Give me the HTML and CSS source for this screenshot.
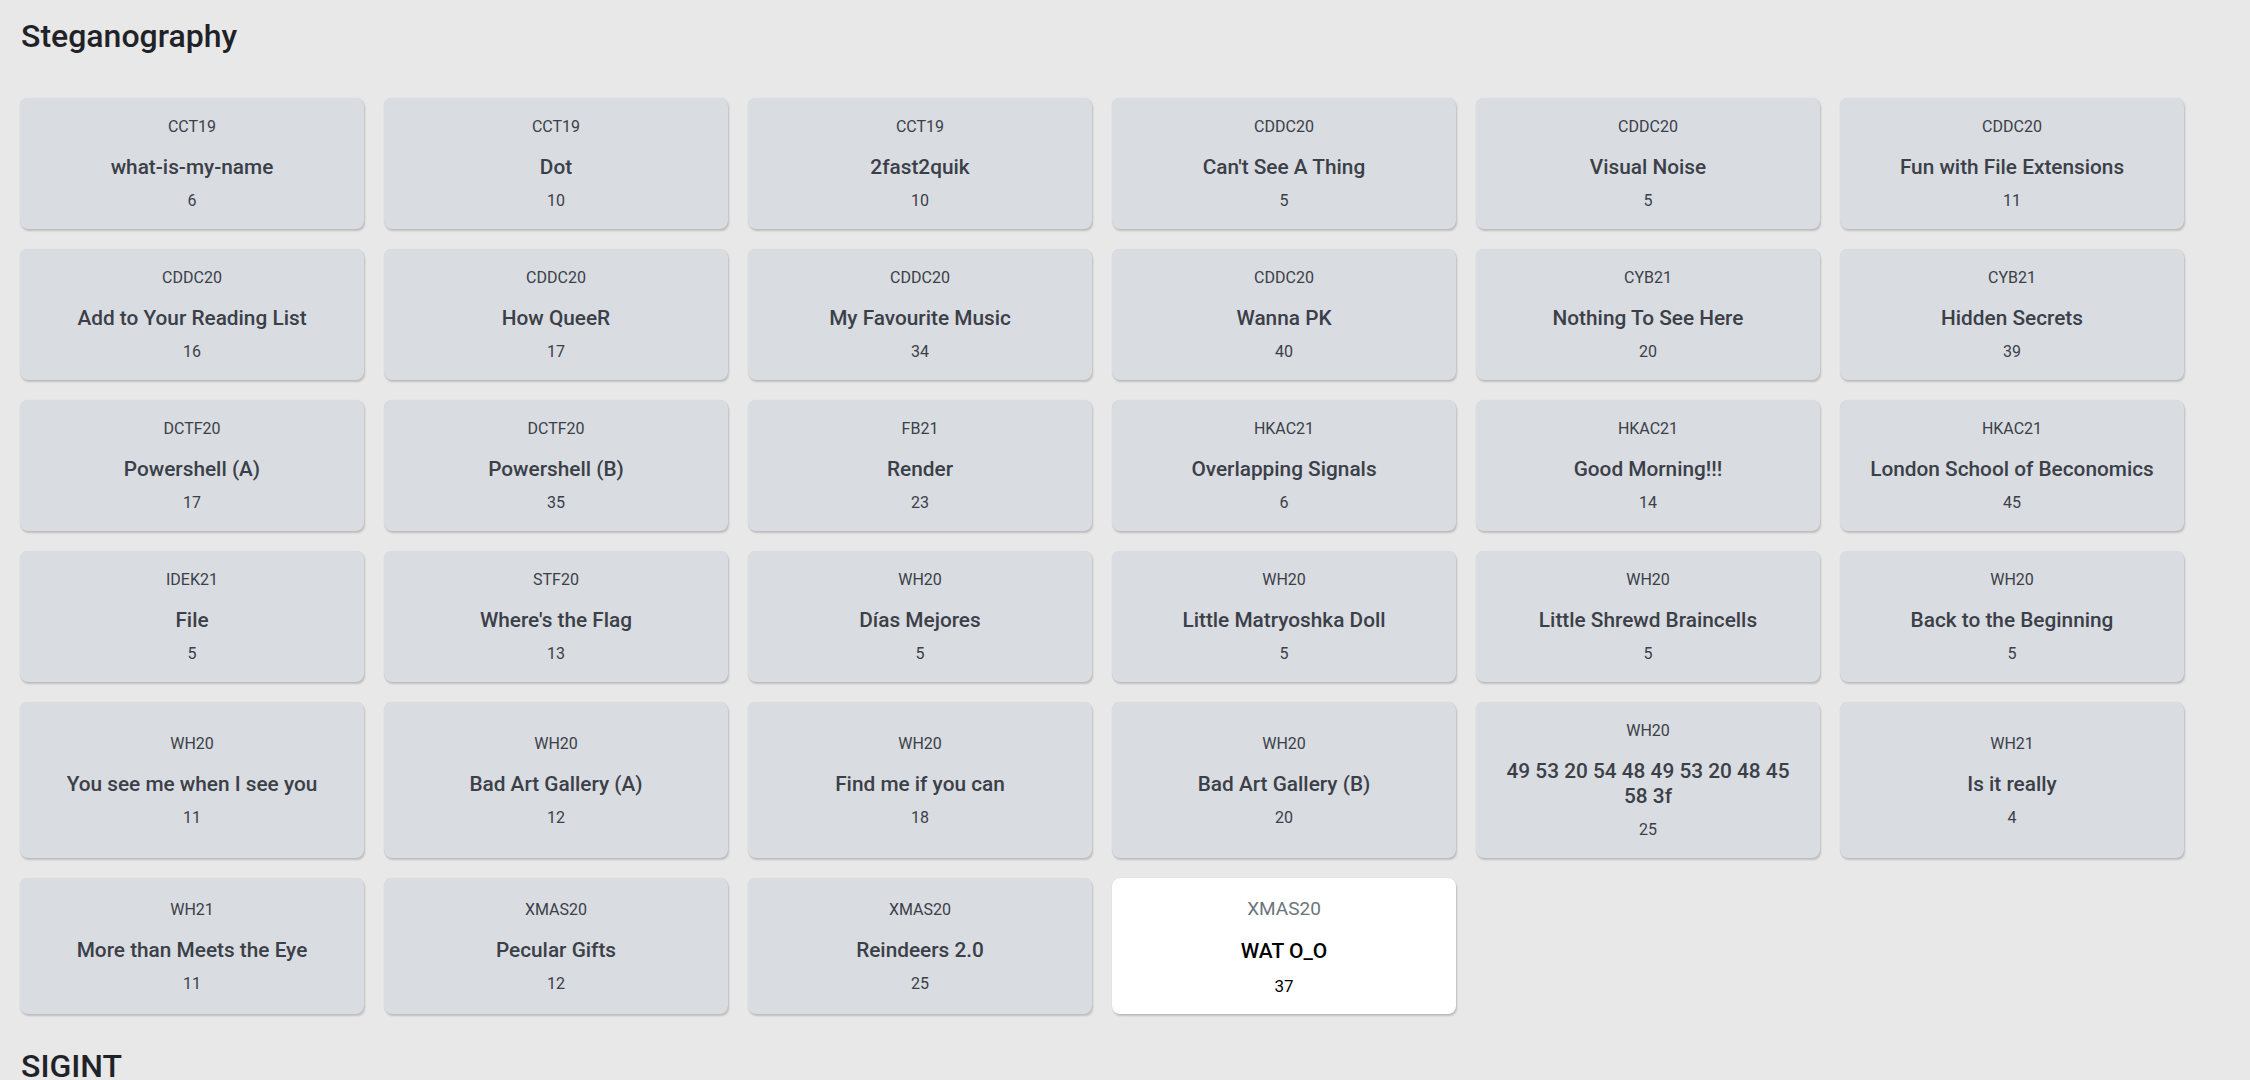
FILE: index.html
```html
<!DOCTYPE html>
<html lang="en">
<head>
<meta charset="utf-8">
<title>Challenges</title>
<link rel="stylesheet" href="styles.css">
</head>
<body>
<main class="page">
  <section class="category">
    <h2 class="category-title">Steganography</h2>
    <div class="grid">
      <div class="card"><div class="card-event">CCT19</div><div class="card-name">what-is-my-name</div><div class="card-count">6</div></div>
      <div class="card"><div class="card-event">CCT19</div><div class="card-name">Dot</div><div class="card-count">10</div></div>
      <div class="card"><div class="card-event">CCT19</div><div class="card-name">2fast2quik</div><div class="card-count">10</div></div>
      <div class="card"><div class="card-event">CDDC20</div><div class="card-name">Can't See A Thing</div><div class="card-count">5</div></div>
      <div class="card"><div class="card-event">CDDC20</div><div class="card-name">Visual Noise</div><div class="card-count">5</div></div>
      <div class="card"><div class="card-event">CDDC20</div><div class="card-name">Fun with File Extensions</div><div class="card-count">11</div></div>

      <div class="card"><div class="card-event">CDDC20</div><div class="card-name">Add to Your Reading List</div><div class="card-count">16</div></div>
      <div class="card"><div class="card-event">CDDC20</div><div class="card-name">How QueeR</div><div class="card-count">17</div></div>
      <div class="card"><div class="card-event">CDDC20</div><div class="card-name">My Favourite Music</div><div class="card-count">34</div></div>
      <div class="card"><div class="card-event">CDDC20</div><div class="card-name">Wanna PK</div><div class="card-count">40</div></div>
      <div class="card"><div class="card-event">CYB21</div><div class="card-name">Nothing To See Here</div><div class="card-count">20</div></div>
      <div class="card"><div class="card-event">CYB21</div><div class="card-name">Hidden Secrets</div><div class="card-count">39</div></div>

      <div class="card"><div class="card-event">DCTF20</div><div class="card-name">Powershell (A)</div><div class="card-count">17</div></div>
      <div class="card"><div class="card-event">DCTF20</div><div class="card-name">Powershell (B)</div><div class="card-count">35</div></div>
      <div class="card"><div class="card-event">FB21</div><div class="card-name">Render</div><div class="card-count">23</div></div>
      <div class="card"><div class="card-event">HKAC21</div><div class="card-name">Overlapping Signals</div><div class="card-count">6</div></div>
      <div class="card"><div class="card-event">HKAC21</div><div class="card-name">Good Morning!!!</div><div class="card-count">14</div></div>
      <div class="card"><div class="card-event">HKAC21</div><div class="card-name">London School of Beconomics</div><div class="card-count">45</div></div>

      <div class="card"><div class="card-event">IDEK21</div><div class="card-name">File</div><div class="card-count">5</div></div>
      <div class="card"><div class="card-event">STF20</div><div class="card-name">Where's the Flag</div><div class="card-count">13</div></div>
      <div class="card"><div class="card-event">WH20</div><div class="card-name">Días Mejores</div><div class="card-count">5</div></div>
      <div class="card"><div class="card-event">WH20</div><div class="card-name">Little Matryoshka Doll</div><div class="card-count">5</div></div>
      <div class="card"><div class="card-event">WH20</div><div class="card-name">Little Shrewd Braincells</div><div class="card-count">5</div></div>
      <div class="card"><div class="card-event">WH20</div><div class="card-name">Back to the Beginning</div><div class="card-count">5</div></div>

      <div class="card"><div class="card-event">WH20</div><div class="card-name">You see me when I see you</div><div class="card-count">11</div></div>
      <div class="card"><div class="card-event">WH20</div><div class="card-name">Bad Art Gallery (A)</div><div class="card-count">12</div></div>
      <div class="card"><div class="card-event">WH20</div><div class="card-name">Find me if you can</div><div class="card-count">18</div></div>
      <div class="card"><div class="card-event">WH20</div><div class="card-name">Bad Art Gallery (B)</div><div class="card-count">20</div></div>
      <div class="card"><div class="card-event">WH20</div><div class="card-name">49 53 20 54 48 49 53 20 48 45 58 3f</div><div class="card-count">25</div></div>
      <div class="card"><div class="card-event">WH21</div><div class="card-name">Is it really</div><div class="card-count">4</div></div>

      <div class="card"><div class="card-event">WH21</div><div class="card-name">More than Meets the Eye</div><div class="card-count">11</div></div>
      <div class="card"><div class="card-event">XMAS20</div><div class="card-name">Pecular Gifts</div><div class="card-count">12</div></div>
      <div class="card"><div class="card-event">XMAS20</div><div class="card-name">Reindeers 2.0</div><div class="card-count">25</div></div>
      <div class="card card-active"><div class="card-event">XMAS20</div><div class="card-name">WAT O_O</div><div class="card-count">37</div></div>
    </div>
  </section>
  <section class="category">
    <h2 class="category-title">SIGINT</h2>
  </section>
</main>
</body>
</html>
```

FILE: styles.css
```css
html, body {
  margin: 0;
  padding: 0;
}

body {
  background: #e8e8e8;
  font-family: Roboto, "Liberation Sans", Arial, sans-serif;
  color: #212529;
}

.page {
  padding: 0 20px;
}

.category {
  padding-top: 16px;
}

.category-title {
  margin: 0 0 43px;
  padding: 1px 0 0 1px;
  font-size: 32px;
  line-height: 38.4px;
  font-weight: 500;
  color: #1f2328;
}

.grid {
  display: grid;
  grid-template-columns: repeat(6, 344px);
  gap: 20px;
  margin-bottom: 16px;
}

.card {
  background: #d9dce1;
  border-radius: 8px;
  box-shadow: 1px 2px 2px rgba(0, 0, 0, 0.18), 0 0 1px rgba(0, 0, 0, 0.12);
  padding: 17px 20px 16px;
  display: flex;
  flex-direction: column;
  justify-content: center;
  text-align: center;
  color: #3b4048;
}

.card-event {
  font-size: 16px;
  line-height: 24px;
  margin-bottom: 16px;
}

.card-name {
  font-size: 20.8px;
  line-height: 24.96px;
  font-weight: 500;
  margin-bottom: 9px;
}

.card-count {
  font-size: 16px;
  line-height: 24px;
}

.card-active {
  background: #ffffff;
  color: #000000;
}

.card-active .card-event {
  font-size: 19px;
  line-height: 27px;
  margin-bottom: 17px;
  color: #6c757d;
}

.card-active .card-name {
  font-size: 21px;
  line-height: 25px;
  font-weight: 500;
  margin-bottom: 10px;
}

.card-active .card-count {
  font-size: 17px;
  line-height: 24px;
}
```
